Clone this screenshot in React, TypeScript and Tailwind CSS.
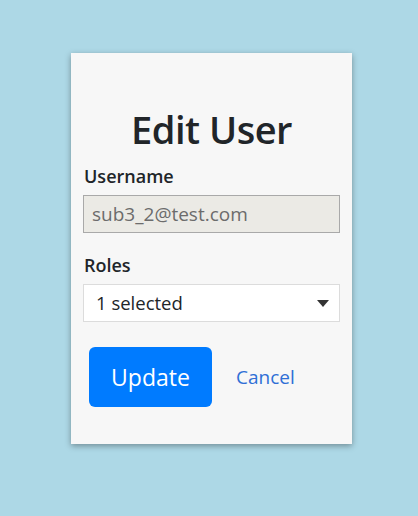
export default function App() {
  return (
    <div
      className="min-h-[516px] w-full bg-[#add8e6] flex justify-center pt-[53px] pl-[5px]"
      style={{ fontFamily: '"Open Sans", "Noto Sans", sans-serif' }}
    >
      <div className="w-[281px] h-[391px] bg-[#f7f7f7] shadow-[0_2px_6px_rgba(0,0,0,0.35)] pl-[12px] pr-[12px] pt-[52px]">
        <h1 className="text-center text-[38px] leading-[48px] font-semibold text-[#212529] tracking-[-0.5px]">
          Edit User
        </h1>
        <label className="block mt-[11px] pl-[1px] text-[18px] leading-[24px] font-semibold text-[#212529]">Username</label>
        <input
          readOnly
          value="sub3_2@test.com"
          className="mt-[7px] w-full h-[38px] border border-[#a9a9a9] bg-[#ebeae5] px-[8px] text-[19px] text-[#6c6c6c] outline-none"
        />
        <label className="block mt-[20px] pl-[1px] text-[18px] leading-[24px] font-semibold text-[#212529]">Roles</label>
        <div className="mt-[7px] h-[38px] w-full border border-[#dcdcdc] bg-white flex items-center justify-between pl-[12px] pr-[10px]">
          <span className="text-[18.5px] text-[#212529]">1 selected</span>
          <svg width="12" height="7" viewBox="0 0 12 7">
            <path d="M0 0h12L6 7z" fill="#333" />
          </svg>
        </div>
        <div className="mt-[25px] flex items-center pl-[6px]">
          <button className="w-[123px] h-[60px] rounded-[6px] bg-[#007bff] text-white text-[23px]">
            Update
          </button>
          <a className="ml-[24px] text-[19px] text-[#2f6fd6]">Cancel</a>
        </div>
      </div>
    </div>
  );
}
